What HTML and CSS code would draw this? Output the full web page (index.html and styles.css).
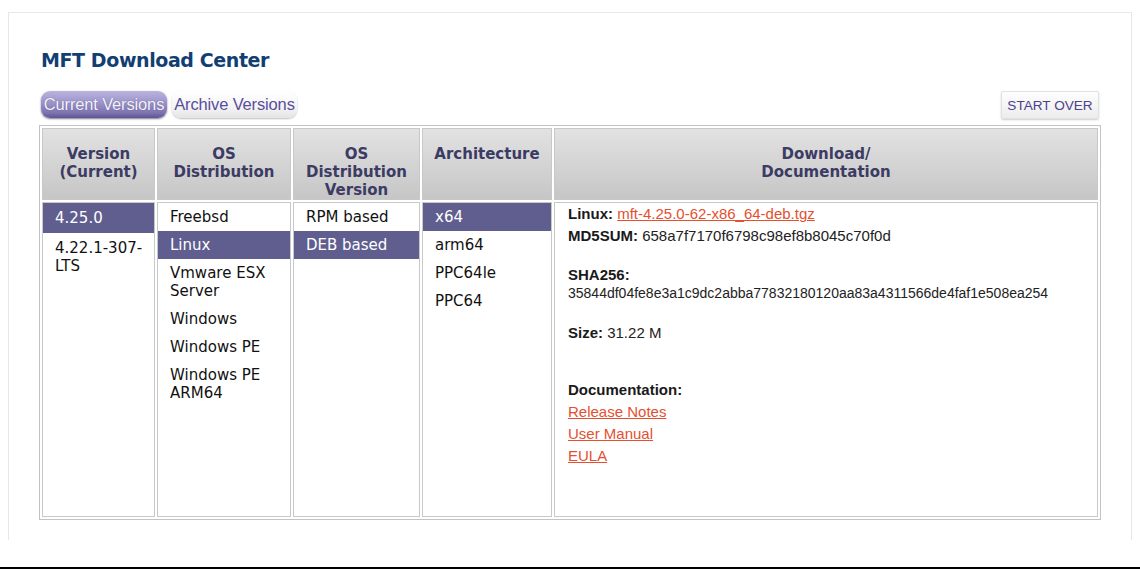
FILE: index.html
```html
<!DOCTYPE html>
<html>
<head>
<meta charset="utf-8">
<title>MFT Download Center</title>
<link rel="stylesheet" href="styles.css">
</head>
<body>
<div class="panel">
  <h1 class="title">MFT Download Center</h1>
  <div class="toolbar">
    <div class="tabs">
      <a class="tab tab-active">Current Versions</a>
      <a class="tab tab-idle">Archive Versions</a>
    </div>
    <button class="start-over">START OVER</button>
  </div>
  <table class="grid">
    <colgroup>
      <col class="c1"><col class="c2"><col class="c3"><col class="c4"><col class="c5">
    </colgroup>
    <thead>
      <tr>
        <th>Version<br>(Current)</th>
        <th>OS<br>Distribution</th>
        <th>OS<br>Distribution<br>Version</th>
        <th>Architecture</th>
        <th>Download/<br>Documentation</th>
      </tr>
    </thead>
    <tbody>
      <tr class="body-row">
        <td>
          <div class="item item-tall selected">4.25.0</div>
          <div class="item item-tall">4.22.1-307-<br>LTS</div>
        </td>
        <td>
          <div class="item">Freebsd</div>
          <div class="item selected">Linux</div>
          <div class="item">Vmware ESX<br>Server</div>
          <div class="item">Windows</div>
          <div class="item">Windows PE</div>
          <div class="item">Windows PE<br>ARM64</div>
        </td>
        <td>
          <div class="item">RPM based</div>
          <div class="item selected">DEB based</div>
        </td>
        <td>
          <div class="item selected">x64</div>
          <div class="item">arm64</div>
          <div class="item">PPC64le</div>
          <div class="item">PPC64</div>
        </td>
        <td class="details">
          <div class="line"><b>Linux:</b> <a class="link" href="#">mft-4.25.0-62-x86_64-deb.tgz</a></div>
          <div class="line"><b>MD5SUM:</b> 658a7f7170f6798c98ef8b8045c70f0d</div>
          <div class="sha-label"><b>SHA256:</b></div>
          <div class="sha-value">35844df04fe8e3a1c9dc2abba77832180120aa83a4311566de4faf1e508ea254</div>
          <div class="size"><b>Size:</b> 31.22 M</div>
          <div class="doc-title"><b>Documentation:</b></div>
          <a class="link doc-link" href="#">Release Notes</a>
          <a class="link doc-link" href="#">User Manual</a>
          <a class="link doc-link" href="#">EULA</a>
        </td>
      </tr>
    </tbody>
  </table>
</div>
<div class="footer-line"></div>
</body>
</html>
```

FILE: styles.css
```css
html, body {
  margin: 0;
  padding: 0;
  background: #ffffff;
}

body {
  font-family: "DejaVu Sans", Verdana, sans-serif;
  color: #111;
}

.panel {
  box-sizing: border-box;
  margin: 12px 8px 0 8px;
  height: 528px;
  border: 1px solid #e8e8e8;
  border-bottom: none;
  padding: 35px 30px 0 30px;
}

.title {
  margin: 0 0 0 2px;
  font-family: "DejaVu Sans", Verdana, sans-serif;
  font-weight: bold;
  font-size: 19px;
  letter-spacing: -0.4px;
  line-height: 24px;
  color: #123f73;
}

.toolbar {
  display: flex;
  justify-content: space-between;
  align-items: flex-end;
  margin-top: 19px;
  margin-bottom: 6px;
  padding: 0 2px;
}

.tabs {
  display: flex;
  gap: 5px;
  margin-bottom: 1px;
}

.tab {
  display: block;
  box-sizing: border-box;
  height: 27px;
  line-height: 27px;
  text-align: center;
  font-family: "Liberation Sans", Arial, sans-serif;
  font-size: 16.5px;
  letter-spacing: -0.15px;
  border-radius: 9px;
  cursor: pointer;
  white-space: nowrap;
}

.tab-active {
  width: 126px;
  color: #f3f3f9;
  background: linear-gradient(#bab3df 0%, #9b93c9 45%, #7e74b0 80%, #5f5690 100%);
  box-shadow: 0 1px 2px rgba(40, 30, 80, 0.6);
  text-shadow: 0 0 1px rgba(60, 50, 110, 0.6);
}

.tab-idle {
  width: 125px;
  color: #5a4e9c;
  background: linear-gradient(#ffffff 0%, #f4f4f4 60%, #e4e4e4 100%);
  box-shadow: 0 1px 2px rgba(0, 0, 0, 0.25);
}

.start-over {
  box-sizing: border-box;
  width: 98px;
  height: 28px;
  padding: 0;
  font-family: "Liberation Sans", Arial, sans-serif;
  font-size: 13.6px;
  color: #4c418f;
  background: linear-gradient(#fefefe, #ececec);
  border: 1px solid #e2e2e2;
  border-radius: 2px;
  box-shadow: 0 1px 2px rgba(0, 0, 0, 0.2);
}

.grid {
  width: 1062px;
  table-layout: fixed;
  border-collapse: separate;
  border-spacing: 2px;
  border: 1px solid #c3c3c3;
}

.c1 { width: 113px; }
.c2 { width: 134px; }
.c3 { width: 127px; }
.c4 { width: 130px; }
.c5 { width: 544px; }

.grid th {
  border: 1px solid #c8c8c8;
  padding: 16px 2px 0 2px;
  vertical-align: top;
  font-family: "DejaVu Sans", Verdana, sans-serif;
  font-weight: bold;
  font-size: 15px;
  line-height: 18px;
  color: #3b3b63;
  text-align: center;
  background: linear-gradient(#e2e2e2, #c6c6c6);
}

.grid td {
  border: 1px solid #c8c8c8;
  padding: 0;
  vertical-align: top;
}

.body-row {
  height: 315px;
}

.item {
  padding: 5px 0 5px 12px;
  font-size: 15px;
  line-height: 18px;
  color: #111;
  white-space: nowrap;
}

.item-tall {
  padding-top: 6px;
  padding-bottom: 6px;
}

.selected {
  background: #5f5e8f;
  color: #ffffff;
}

.details {
  padding: 0 13px 0 13px !important;
  font-family: "Liberation Sans", Arial, sans-serif;
  font-size: 15px;
  color: #222;
}

.details b {
  color: #1a1a1a;
}

.line {
  line-height: 22px;
}

.sha-label {
  margin-top: 19px;
  line-height: 18px;
}

.sha-value {
  font-size: 14px;
  line-height: 18px;
}

.size {
  margin-top: 22px;
  line-height: 18px;
}

.doc-title {
  margin-top: 37px;
  line-height: 22px;
}

.link {
  color: #e4502f;
  text-decoration: underline;
}

.doc-link {
  display: block;
  width: max-content;
  line-height: 22px;
}

.footer-line {
  margin-top: 27px;
  height: 0;
  border-top: 2px solid #000;
}
```
